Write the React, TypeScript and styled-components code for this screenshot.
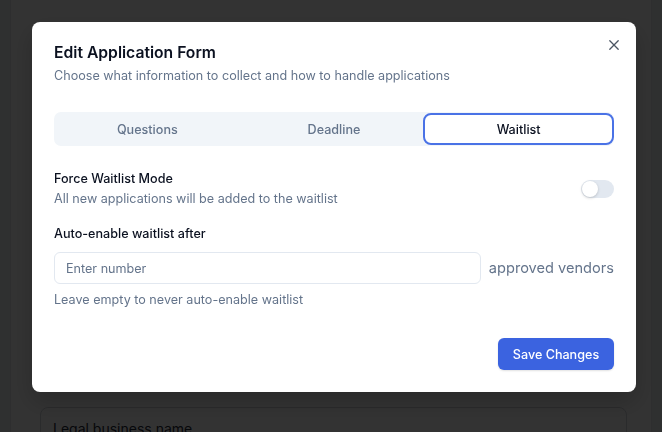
import React from "react";
import styled, { createGlobalStyle, css } from "styled-components";

const GlobalStyle = createGlobalStyle`
  * { box-sizing: border-box; }
  html, body { margin: 0; padding: 0; height: 100%; overflow: hidden; }
  body {
    background: #eceef0;
    font-family: Inter, "Noto Sans", "Liberation Sans", sans-serif;
    -webkit-font-smoothing: antialiased;
  }
`;

/* ---------- underlying page ---------- */
const Page = styled.div`
  margin: 0 10px;
  height: 432px;
  background: #ffffff;
  border-left: 1px solid #e5e7eb;
  border-right: 1px solid #e5e7eb;
  padding: 372px 24px 0 29px;
  display: flex;
  flex-direction: column;
  gap: 15px;
`;

const PageLabel = styled.div`
  font-size: 14px;
  font-weight: 500;
  color: #111827;
  padding-left: 20px;
  line-height: 20px;
`;

const PageField = styled.div`
  border: 1px solid #d1d5db;
  border-radius: 8px;
  height: 60px;
  padding: 12px 12px;
  font-size: 14px;
  color: #1f2937;
`;

/* ---------- overlay + dialog ---------- */
const Overlay = styled.div`
  position: fixed;
  inset: 0;
  background: rgba(0, 0, 0, 0.8);
`;

const Dialog = styled.div`
  position: fixed;
  left: 32px;
  top: 22px;
  width: 604px;
  background: #ffffff;
  border-radius: 8px;
  box-shadow: 0 10px 25px rgba(0, 0, 0, 0.2);
  padding: 19px 22px 22px;
  display: flex;
  flex-direction: column;
`;

const CloseButton = styled.button`
  position: absolute;
  top: 16px;
  right: 15px;
  width: 14px;
  height: 14px;
  padding: 0;
  border: none;
  background: transparent;
  color: #4b5563;
  display: flex;
  align-items: center;
  justify-content: center;
  cursor: pointer;
`;

const Title = styled.h2`
  margin: 0;
  font-size: 15.7px;
  line-height: 24px;
  font-weight: 600;
  color: #0b1120;
`;

const Subtitle = styled.p`
  margin: 1px 0 0;
  font-size: 12.6px;
  line-height: 20px;
  color: #64748b;
`;

const TabList = styled.div`
  margin-top: 26px;
  height: 34px;
  background: #f1f5f9;
  border-radius: 7px;
  display: grid;
  grid-template-columns: 1fr 1fr 1fr;
  align-items: stretch;
`;

const Tab = styled.button<{ $active?: boolean }>`
  border: 2px solid transparent;
  background: transparent;
  border-radius: 8px;
  font-family: inherit;
  font-size: 12.6px;
  font-weight: 500;
  color: #64748b;
  cursor: pointer;
  ${(p) =>
    p.$active &&
    css`
      background: #ffffff;
      border-color: #4a72e6;
      color: #0b1120;
      margin: 1px 0 1px -4px;
    `}
`;

const Row = styled.div`
  margin-top: 23px;
  display: flex;
  align-items: center;
  justify-content: space-between;
`;

const TextCol = styled.div`
  display: flex;
  flex-direction: column;
`;

const Label = styled.div`
  font-size: 12.6px;
  line-height: 20px;
  font-weight: 500;
  color: #0b1120;
`;

const Muted = styled.div`
  font-size: 12.6px;
  line-height: 20px;
  color: #64748b;
`;

const Switch = styled.div<{ $on?: boolean }>`
  width: 33px;
  height: 18px;
  border-radius: 9px;
  background: ${(p) => (p.$on ? "#3b63e0" : "#e2e8f0")};
  padding: 1px;
  display: flex;
  justify-content: ${(p) => (p.$on ? "flex-end" : "flex-start")};
`;

const Knob = styled.span`
  width: 16px;
  height: 16px;
  border-radius: 50%;
  background: #ffffff;
  box-shadow: 0 1px 3px rgba(0, 0, 0, 0.18);
`;

const Field = styled.div`
  margin-top: 15px;
  display: flex;
  flex-direction: column;
`;

const InputRow = styled.div`
  margin-top: 8px;
  display: flex;
  align-items: center;
  gap: 8px;
`;

const Input = styled.input`
  flex: 1;
  min-width: 0;
  height: 32px;
  border: 1px solid #e2e8f0;
  border-radius: 6px;
  padding: 0 11px;
  font-family: inherit;
  font-size: 12.6px;
  color: #0b1120;
  outline: none;
  &::placeholder {
    color: #64748b;
  }
`;

const Suffix = styled.span`
  flex-shrink: 0;
  white-space: nowrap;
  font-size: 14.6px;
  color: #64748b;
`;

const Helper = styled(Muted)`
  margin-top: 6px;
`;

const Footer = styled.div`
  margin-top: 28px;
  display: flex;
  justify-content: flex-end;
`;

const PrimaryButton = styled.button`
  width: 116px;
  height: 32px;
  border: none;
  border-radius: 6px;
  background: #3b63e0;
  color: #ffffff;
  font-family: inherit;
  font-size: 12.6px;
  font-weight: 500;
  box-shadow: 0 1px 2px rgba(0, 0, 0, 0.12);
  cursor: pointer;
`;

export default function App() {
  const [tab, setTab] = React.useState("Waitlist");
  return (
    <>
      <GlobalStyle />
      <Page>
        <PageLabel>Legal Entity</PageLabel>
        <PageField>Legal business name...</PageField>
      </Page>
      <Overlay />
      <Dialog role="dialog">
        <CloseButton aria-label="Close">
          <svg width="12" height="12" viewBox="0 0 12 12" fill="none" stroke="currentColor" strokeWidth="1.3" strokeLinecap="round">
            <path d="M1.8 1.8l8.4 8.4M10.2 1.8l-8.4 8.4" />
          </svg>
        </CloseButton>
        <Title>Edit Application Form</Title>
        <Subtitle>Choose what information to collect and how to handle applications</Subtitle>
        <TabList>
          {["Questions", "Deadline", "Waitlist"].map((t) => (
            <Tab key={t} $active={tab === t} onClick={() => setTab(t)}>
              {t}
            </Tab>
          ))}
        </TabList>
        <Row>
          <TextCol>
            <Label>Force Waitlist Mode</Label>
            <Muted>All new applications will be added to the waitlist</Muted>
          </TextCol>
          <Switch>
            <Knob />
          </Switch>
        </Row>
        <Field>
          <Label>Auto-enable waitlist after</Label>
          <InputRow>
            <Input placeholder="Enter number" />
            <Suffix>approved vendors</Suffix>
          </InputRow>
          <Helper>Leave empty to never auto-enable waitlist</Helper>
        </Field>
        <Footer>
          <PrimaryButton>Save Changes</PrimaryButton>
        </Footer>
      </Dialog>
    </>
  );
}
